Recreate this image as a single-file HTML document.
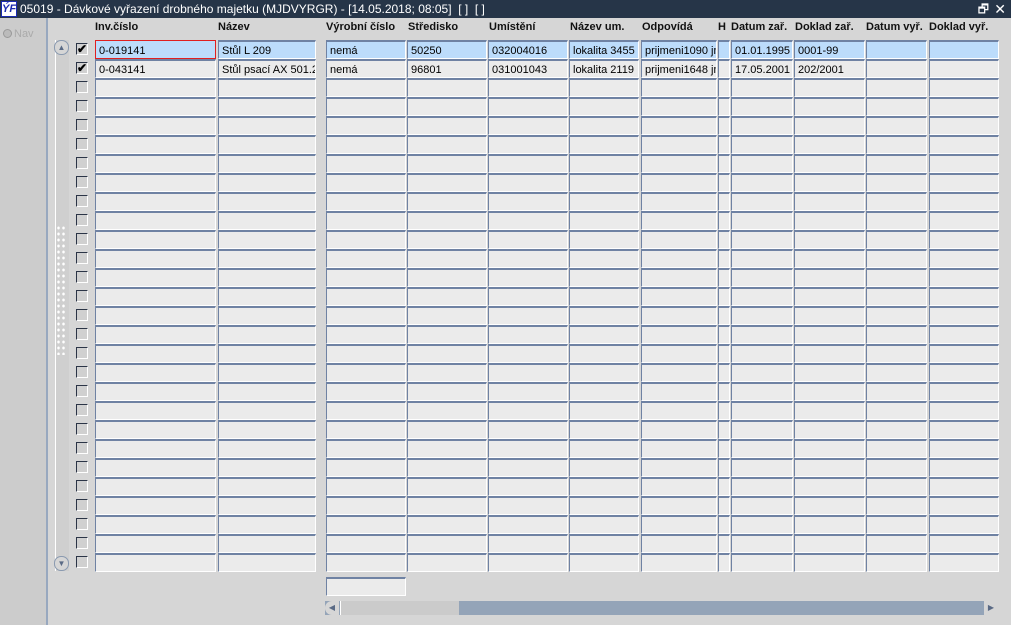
<!DOCTYPE html>
<html><head><meta charset="utf-8">
<style>
*{margin:0;padding:0;box-sizing:border-box}
body{width:1011px;height:625px;overflow:hidden;background:#d6d6d6;font-family:"Liberation Sans",Arial,sans-serif;font-size:11px;position:relative}
.title{position:absolute;left:0;top:0;width:1011px;height:18px;background:#263548;color:#fff;font-size:12px;line-height:18px;padding-left:20px}
.logo{position:absolute;left:1px;top:1px;width:16px;height:16px;background:#fff;border:1px solid #1a2bb0;color:#1a2bb0;font:bold italic 11px "Liberation Sans";line-height:14px;text-align:center}
.left{position:absolute;left:0;top:18px;width:48px;height:607px;background:#cccccc;border-right:2px solid #98a8bf}
.nav{position:absolute;left:3px;top:10px;color:#aaa;font-size:11px}
.nav i{display:inline-block;width:9px;height:9px;border-radius:50%;background:#bbb;border:1px solid #999;vertical-align:-1px;margin-right:2px}
.h{position:absolute;top:21px;font-weight:bold;font-size:11px;color:#111}
.c{position:absolute;height:19px;background:#ebebeb;border-top:2px solid #6f82a3;border-left:1px solid #6f82a3;border-right:1px solid #fff;border-bottom:1px solid #fff;padding-left:3px;padding-top:2px;line-height:14px;white-space:nowrap;overflow:hidden;font-size:11px}
.sel{background:#bcdcfb}
.cb{position:absolute;left:76px;width:12px;height:12px;border-top:1px solid #2b3446;border-left:1px solid #2b3446;border-right:1px solid #fff;border-bottom:1px solid #fff;background:#d0d0d0;font-size:12px;line-height:10px;font-weight:bold}
.vs{position:absolute;left:55px;top:40px;width:14px;height:531px;background:#cfcfcf;border-left:1px solid #fff}
.hs{position:absolute;left:325px;top:601px;width:673px;height:14px;background:#94a4b8}
</style></head><body>
<div class="title"><div class="logo">ÝF</div>05019 - Dávkové vyřazení drobného majetku (MJDVYRGR) - [14.05.2018; 08:05]&nbsp; [ ]&nbsp; [ ]
<span style="position:absolute;right:22px;top:0">🗗</span><span style="position:absolute;right:5px;top:0;font-size:14px">✕</span></div>
<div class="left"><div class="nav"><i></i>Nav</div></div>
<div class="h" style="left:95px">Inv.číslo</div>
<div class="h" style="left:218px">Název</div>
<div class="h" style="left:326px">Výrobní číslo</div>
<div class="h" style="left:408px">Středisko</div>
<div class="h" style="left:489px">Umístění</div>
<div class="h" style="left:570px">Název um.</div>
<div class="h" style="left:642px">Odpovídá</div>
<div class="h" style="left:718px">H</div>
<div class="h" style="left:731px">Datum zař.</div>
<div class="h" style="left:795px">Doklad zař.</div>
<div class="h" style="left:866px">Datum vyř.</div>
<div class="h" style="left:929px">Doklad vyř.</div>
<div class="vs">
 <div style="position:absolute;left:-2px;top:0;width:15px;height:15px;border-radius:7px;border:1px solid #8a9ab0;background:#d6d6d6;text-align:center;font-size:8px;line-height:13px;color:#5a6a85">▲</div>
 <div style="position:absolute;left:-2px;bottom:0;width:15px;height:15px;border-radius:7px;border:1px solid #8a9ab0;background:#d6d6d6;text-align:center;font-size:8px;line-height:13px;color:#5a6a85">▼</div>
 <div style="position:absolute;left:0;top:185px;width:9px;height:130px;background-image:radial-gradient(#fff 1px,transparent 1.5px);background-size:5px 6px"></div>
</div>
<div id="g"></div>
<div class="c" style="left:326px;top:577px;width:80px"></div>
<div class="hs">
 <div style="position:absolute;left:0;top:0;width:14px;height:14px;background:#d6d6d6;border-radius:7px 0 0 7px;font-size:8px;line-height:14px;text-align:center;color:#5a6a85">◀</div>
 <div style="position:absolute;left:15px;top:0;width:119px;height:14px;background:#cbcbcb;border-left:1px solid #fff"></div>
 <div style="position:absolute;right:0;top:0;width:14px;height:14px;background:#d6d6d6;font-size:8px;line-height:14px;text-align:center;color:#5a6a85">▶</div>
</div>
<script>
var cols=[[95,121],[218,98],[326,80],[407,80],[488,80],[569,70],[641,76],[718,12],[731,62],[794,71],[866,61],[929,70]];
var data=[["0-019141","Stůl L 209","nemá","50250","032004016","lokalita 3455","prijmeni1090 jm","","01.01.1995","0001-99","",""],
["0-043141","Stůl psací AX 501.2","nemá","96801","031001043","lokalita 2119","prijmeni1648 jm","","17.05.2001","202/2001","",""]];
var h="";
for(var r=0;r<28;r++){var y=40+r*19;
 h+='<div class="cb" style="top:'+(y+3)+'px">'+(r<2?'✔':'')+'</div>';
 for(var c=0;c<cols.length;c++){
  var t=r<2?data[r][c]:"";var cls="c"+(r==0?" sel":"");var st="";
  if(r==0&&c==0){st="border:1px solid #e02020;background:#bcdcfb;padding-top:3px;";}
  h+='<div class="'+cls+'" style="left:'+cols[c][0]+'px;top:'+y+'px;width:'+cols[c][1]+'px;'+st+'">'+t+'</div>';}
}
document.getElementById("g").innerHTML=h;
</script>
</body></html>
